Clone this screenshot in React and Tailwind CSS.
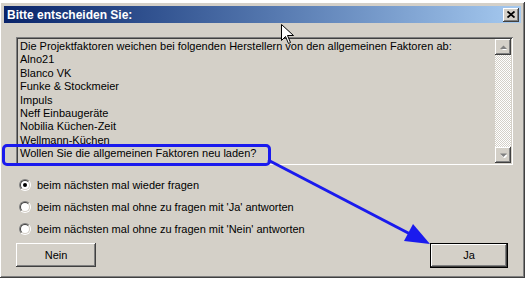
const raised =
  "shadow-[inset_-1px_-1px_0_#404040,inset_1px_1px_0_#ffffff,inset_-2px_-2px_0_#808080,inset_2px_2px_0_#d4d0c8]";

const lines = [
  "Die Projektfaktoren weichen bei folgenden Herstellern von den allgemeinen Faktoren ab:",
  "Alno21",
  "Blanco VK",
  "Funke & Stockmeier",
  "Impuls",
  "Neff Einbaugeräte",
  "Nobilia Küchen-Zeit",
  "Wellmann-Küchen",
  "Wollen Sie die allgemeinen Faktoren neu laden?",
];

const options = [
  "beim nächsten mal wieder fragen",
  "beim nächsten mal ohne zu fragen mit 'Ja' antworten",
  "beim nächsten mal ohne zu fragen mit 'Nein' antworten",
];

function Radio({ checked }) {
  return (
    <div className="w-[12px] h-[12px] rounded-full border border-t-[#808080] border-l-[#808080] border-b-white border-r-white">
      <div className="w-full h-full rounded-full bg-white border border-t-[#404040] border-l-[#404040] border-b-[#d4d0c8] border-r-[#d4d0c8] flex items-center justify-center">
        {checked && <div className="w-[4px] h-[4px] rounded-full bg-black" />}
      </div>
    </div>
  );
}

function ScrollButton({ up }) {
  return (
    <div className={`w-[16px] h-[16px] bg-[#d4d0c8] flex items-center justify-center ${raised}`}>
      <svg width="7" height="5" viewBox="0 0 7 5">
        {up ? (
          <>
            <path d="M1 4 L6 4 L3.5 1.5 Z" fill="#ffffff" transform="translate(1 1)" />
            <path d="M0 4 L7 4 L3.5 0.5 Z" fill="#808080" />
          </>
        ) : (
          <>
            <path d="M0 1 L7 1 L3.5 4.5 Z" fill="#ffffff" transform="translate(1 1)" />
            <path d="M0 0.5 L7 0.5 L3.5 4 Z" fill="#808080" />
          </>
        )}
      </svg>
    </div>
  );
}

export default function App() {
  return (
    <div
      className="relative w-[530px] h-[281px] bg-white pt-[2px] overflow-hidden"
      style={{ fontFamily: '"Liberation Sans", Arial, sans-serif' }}
    >
      <div
        className={`w-[525px] h-[276px] bg-[#d4d0c8] p-[4px] flex flex-col ${raised}`}
      >
        {/* title bar */}
        <div className="h-[17px] flex items-center justify-between bg-gradient-to-r from-[#0a246a] to-[#a6caf0] pl-[3px] pr-[2px]">
          <span className="text-white font-bold text-[12px] leading-none">Bitte entscheiden Sie:</span>
          <div className={`w-[16px] h-[14px] bg-[#d4d0c8] flex items-center justify-center ${raised}`}>
            <svg width="8" height="7" viewBox="0 0 8 7">
              <path d="M0.5 0.5 L7.5 6.5 M7.5 0.5 L0.5 6.5" stroke="#000" strokeWidth="1.8" />
            </svg>
          </div>
        </div>

        <div className="flex-1 flex flex-col pl-[12px] pr-[8px]">
          {/* memo */}
          <div className="mt-[14px] h-[128px] flex shadow-[inset_1px_1px_0_#808080,inset_-1px_-1px_0_#ffffff,inset_2px_2px_0_#404040,inset_-2px_-2px_0_#d4d0c8] p-[2px]">
            <div className="flex-1 overflow-hidden pl-[2px] pt-[1px] text-[11px] leading-[13.4px] text-black whitespace-nowrap">
              {lines.map((l) => (
                <div key={l}>{l}</div>
              ))}
            </div>
            <div className="w-[16px] flex flex-col bg-[conic-gradient(#ffffff_25%,#d4d0c8_0_50%,#ffffff_0_75%,#d4d0c8_0)] bg-[length:2px_2px]">
              <ScrollButton up />
              <div className="flex-1" />
              <ScrollButton />
            </div>
          </div>

          {/* radio group */}
          <div className="mt-[9px] pl-[3px] flex flex-col">
            {options.map((o, i) => (
              <div key={o} className="h-[22px] flex items-center gap-[6px]">
                <Radio checked={i === 0} />
                <span className="text-[11px] text-black">{o}</span>
              </div>
            ))}
          </div>

          {/* buttons */}
          <div className="mt-[3px] flex justify-between items-start">
            <div className={`w-[80px] h-[24px] flex items-center justify-center text-[11px] text-black ${raised}`}>
              Nein
            </div>
            <div className="mr-[5px] w-[78px] h-[25px] border border-black">
              <div className={`w-full h-full flex items-center justify-center text-[11px] text-black ${raised}`}>
                Ja
              </div>
            </div>
          </div>
        </div>
      </div>

      {/* annotation */}
      <div className="absolute left-[2px] top-[144px] w-[269px] h-[22px] rounded-[5px] border-[3px] border-[#1a1aee]" />
      <svg className="absolute left-0 top-0" width="530" height="281" viewBox="0 0 530 281">
        <line x1="268" y1="160" x2="412" y2="235" stroke="#1a1aee" strokeWidth="3" />
        <path d="M430 244 L404 241 L413 224 Z" fill="#1a1aee" />
        <path
          d="M281.5 24.5 L281.5 40.5 L285.5 36.5 L288.5 43.5 L290.5 42.5 L287.5 35.5 L293.5 35.5 Z"
          fill="#ffffff"
          stroke="#000000"
          strokeWidth="1"
        />
      </svg>
    </div>
  );
}
